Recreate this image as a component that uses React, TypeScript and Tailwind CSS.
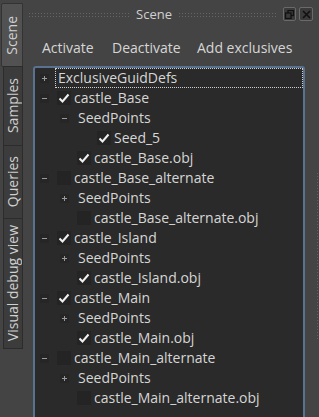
import React from "react";

type Row = {
  level: number;
  exp: "+" | "-" | null;
  check: boolean | null;
  label: string;
  focus?: boolean;
};

const ROWS: Row[] = [
  { level: 0, exp: "+", check: null, label: "ExclusiveGuidDefs", focus: true },
  { level: 0, exp: "-", check: true, label: "castle_Base" },
  { level: 1, exp: "-", check: null, label: "SeedPoints" },
  { level: 2, exp: null, check: true, label: "Seed_5" },
  { level: 1, exp: null, check: true, label: "castle_Base.obj" },
  { level: 0, exp: "-", check: false, label: "castle_Base_alternate" },
  { level: 1, exp: "+", check: null, label: "SeedPoints" },
  { level: 1, exp: null, check: false, label: "castle_Base_alternate.obj" },
  { level: 0, exp: "-", check: true, label: "castle_Island" },
  { level: 1, exp: "+", check: null, label: "SeedPoints" },
  { level: 1, exp: null, check: true, label: "castle_Island.obj" },
  { level: 0, exp: "-", check: true, label: "castle_Main" },
  { level: 1, exp: "+", check: null, label: "SeedPoints" },
  { level: 1, exp: null, check: true, label: "castle_Main.obj" },
  { level: 0, exp: "-", check: false, label: "castle_Main_alternate" },
  { level: 1, exp: "+", check: null, label: "SeedPoints" },
  { level: 1, exp: null, check: false, label: "castle_Main_alternate.obj" },
];

const INDENT = ["pl-0", "pl-[20px]", "pl-[40px]"];

const TABS = [
  { label: "Scene", h: "h-[64px]", active: true },
  { label: "Samples", h: "h-[80px]", active: false },
  { label: "Queries", h: "h-[74px]", active: false },
  { label: "Visual debug view", h: "h-[131px]", active: false },
];

function Expander({ sign }: { sign: "+" | "-" }) {
  return (
    <svg width="9" height="9" viewBox="0 0 9 9" className="block">
      <rect x="0" y="0" width="9" height="9" fill="#262626" />
      <line x1="2" y1="4.5" x2="7" y2="4.5" stroke="#9a9a9a" strokeWidth="1" />
      {sign === "+" && <line x1="4.5" y1="2" x2="4.5" y2="7" stroke="#9a9a9a" strokeWidth="1" />}
    </svg>
  );
}

function Check({ on }: { on: boolean }) {
  return (
    <div className="w-[14px] h-[14px] bg-[#242424] flex items-center justify-center shrink-0">
      {on && (
        <svg width="12" height="11" viewBox="0 0 12 11">
          <path d="M1.5 5.5 L4.5 8.5 L10.5 1.5" fill="none" stroke="#f0f0f0" strokeWidth="2" />
        </svg>
      )}
    </div>
  );
}

const grip =
  "bg-[radial-gradient(circle,#666666_0.9px,transparent_1px)] bg-[length:3px_3px]";

export default function App() {
  return (
    <div
      className="flex w-[319px] h-[417px] bg-[#444444] overflow-hidden text-[#d6d6d6]"
      style={{ fontFamily: "'Open Sans', 'Noto Sans', sans-serif" }}
    >
      {/* West tabs */}
      <div className="w-[24px] shrink-0 flex flex-col pt-[3px]">
        {TABS.map((t) => (
          <div
            key={t.label}
            className={`${t.h} flex items-center justify-center border ${
              t.active
                ? "ml-[1px] w-[22px] bg-[#525252] border-[#333333] rounded-l-[2px]"
                : "ml-[3px] w-[20px] bg-[#3c3c3c] border-[#2c2c2c] -mt-px"
            }`}
          >
            <span className="[writing-mode:vertical-rl] rotate-180 text-[14px] leading-none whitespace-nowrap text-[#d0d0d0]">
              {t.label}
            </span>
          </div>
        ))}
      </div>

      {/* Dock */}
      <div className="flex-1 flex flex-col min-w-0">
        {/* Title bar */}
        <div className="h-[28px] flex items-center pl-[4px] pr-[6px] shrink-0">
          <div className={`w-[102px] h-[5px] ${grip}`} />
          <div className="flex-1 text-center text-[13px] leading-none text-[#d0d0d0]">Scene</div>
          <div className={`w-[100px] h-[5px] ${grip}`} />
          <div className="ml-[5px] flex gap-[3px]">
            <div className="w-[13px] h-[14px] rounded-[2px] border border-[#6a6a6a] bg-[#3a3a3a] flex items-center justify-center">
              <svg width="9" height="9" viewBox="0 0 9 9">
                <rect x="3" y="0.5" width="5.5" height="5" fill="none" stroke="#111" strokeWidth="1.3" />
                <rect x="0.5" y="3" width="5.5" height="5.5" fill="#3a3a3a" stroke="#111" strokeWidth="1.3" />
              </svg>
            </div>
            <div className="w-[14px] h-[14px] rounded-[2px] border border-[#6a6a6a] bg-[#3a3a3a] flex items-center justify-center">
              <svg width="9" height="9" viewBox="0 0 9 9">
                <path d="M1 1 L8 8 M8 1 L1 8" stroke="#111" strokeWidth="1.6" />
              </svg>
            </div>
          </div>
        </div>

        {/* Toolbar */}
        <div className="h-[38px] flex items-center pl-[18px] text-[14px] shrink-0 whitespace-nowrap">
          <span className="w-[70px]">Activate</span>
          <span className="w-[85px]">Deactivate</span>
          <span>Add exclusives</span>
        </div>

        {/* Tree + right grip */}
        <div className="flex flex-1 min-h-0">
          <div className="ml-[9px] w-[272px] h-[360px] shrink-0 border-2 border-[#58728f] rounded-[3px] bg-[#2a2a2a]">
            {ROWS.map((r, i) => (
              <div key={i} className={`h-[20px] flex items-center ${INDENT[r.level]}`}>
                <div className="w-[20px] h-[20px] flex items-center pl-[5px] shrink-0">
                  {r.exp && <Expander sign={r.exp} />}
                </div>
                <div
                  className={`flex-1 h-[20px] flex items-center pl-[2px] ${
                    r.focus ? "border border-dotted border-[#cfcfcf]" : ""
                  }`}
                >
                  {r.check !== null && <Check on={r.check} />}
                  <span
                    className={`text-[14px] leading-none whitespace-nowrap ${
                      r.check !== null ? "ml-[3px]" : r.focus ? "" : "ml-[1px]"
                    }`}
                  >
                    {r.label}
                  </span>
                </div>
              </div>
            ))}
          </div>
          <div className="ml-[11px] mt-[106px] w-[3px] h-[168px] bg-[radial-gradient(circle,#626262_0.9px,transparent_1px)] bg-[length:3px_3px]" />
        </div>
      </div>
    </div>
  );
}
